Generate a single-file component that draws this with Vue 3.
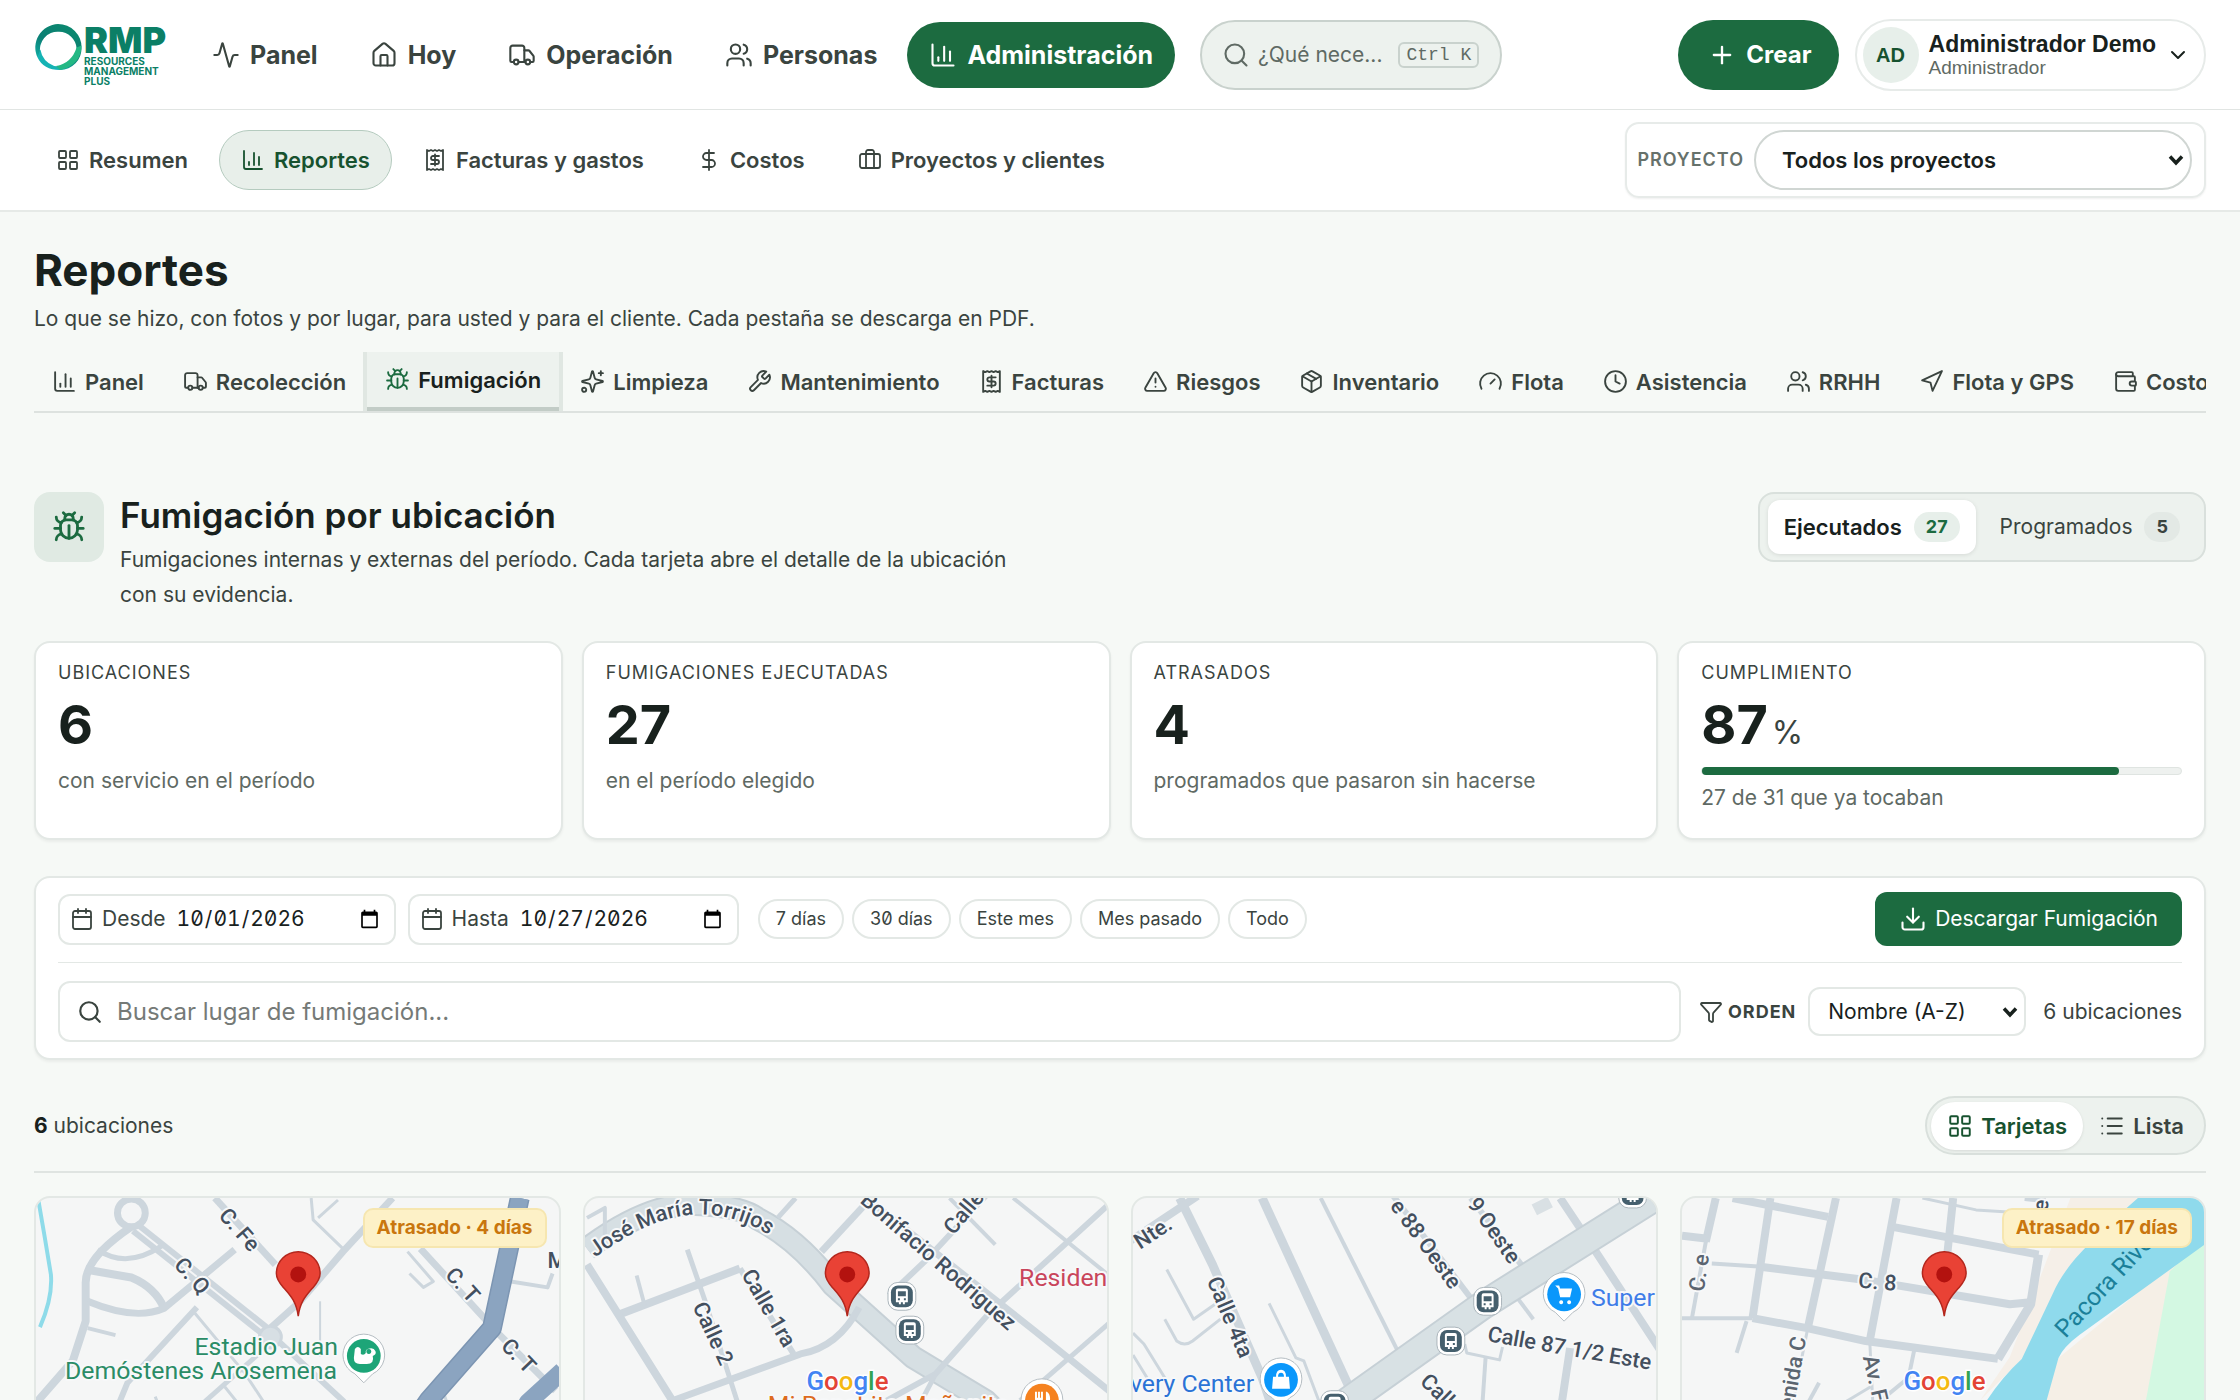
<script setup>
import { h, ref } from 'vue'

const icons = {
  activity: '<path d="M22 12h-2.48a2 2 0 0 0-1.93 1.46l-2.35 8.36a.25.25 0 0 1-.48 0L9.24 2.18a.25.25 0 0 0-.48 0l-2.35 8.36A2 2 0 0 1 4.49 12H2"/>',
  house: '<path d="M15 21v-8a1 1 0 0 0-1-1h-4a1 1 0 0 0-1 1v8"/><path d="M3 10a2 2 0 0 1 .709-1.528l7-5.999a2 2 0 0 1 2.582 0l7 5.999A2 2 0 0 1 21 10v9a2 2 0 0 1-2 2H5a2 2 0 0 1-2-2z"/>',
  truck: '<path d="M14 18V6a2 2 0 0 0-2-2H4a2 2 0 0 0-2 2v11a1 1 0 0 0 1 1h2"/><path d="M15 18H9"/><path d="M19 18h2a1 1 0 0 0 1-1v-3.65a1 1 0 0 0-.22-.624l-3.48-4.35A1 1 0 0 0 17.52 8H14"/><circle cx="17" cy="18" r="2"/><circle cx="7" cy="18" r="2"/>',
  users: '<path d="M16 21v-2a4 4 0 0 0-4-4H6a4 4 0 0 0-4 4v2"/><circle cx="9" cy="7" r="4"/><path d="M22 21v-2a4 4 0 0 0-3-3.87"/><path d="M16 3.13a4 4 0 0 1 0 7.75"/>',
  chart: '<path d="M3 3v16a2 2 0 0 0 2 2h16"/><path d="M18 17V9"/><path d="M13 17V5"/><path d="M8 17v-3"/>',
  search: '<circle cx="11" cy="11" r="8"/><path d="m21 21-4.3-4.3"/>',
  plus: '<path d="M5 12h14"/><path d="M12 5v14"/>',
  chevron: '<path d="m6 9 6 6 6-6"/>',
  grid: '<rect width="7" height="7" x="3" y="3" rx="1"/><rect width="7" height="7" x="14" y="3" rx="1"/><rect width="7" height="7" x="14" y="14" rx="1"/><rect width="7" height="7" x="3" y="14" rx="1"/>',
  receipt: '<path d="M4 2v20l2-1 2 1 2-1 2 1 2-1 2 1 2-1 2 1V2l-2 1-2-1-2 1-2-1-2 1-2-1-2 1Z"/><path d="M16 8h-6a2 2 0 1 0 0 4h4a2 2 0 1 1 0 4H8"/><path d="M12 17.5v-11"/>',
  dollar: '<path d="M12 2v20"/><path d="M17 5H9.5a3.5 3.5 0 0 0 0 7h5a3.5 3.5 0 0 1 0 7H6"/>',
  briefcase: '<path d="M16 20V4a2 2 0 0 0-2-2h-4a2 2 0 0 0-2 2v16"/><rect width="20" height="14" x="2" y="6" rx="2"/>',
  bug: '<path d="m8 2 1.88 1.88"/><path d="M14.12 3.88 16 2"/><path d="M9 7.13v-1a3.003 3.003 0 1 1 6 0v1"/><path d="M12 20c-3.3 0-6-2.7-6-6v-3a4 4 0 0 1 4-4h4a4 4 0 0 1 4 4v3c0 3.3-2.7 6-6 6"/><path d="M12 20v-9"/><path d="M6.53 9C4.6 8.8 3 7.1 3 5"/><path d="M6 13H2"/><path d="M3 21c0-2.1 1.7-3.9 3.8-4"/><path d="M20.97 5c0 2.1-1.6 3.8-3.5 4"/><path d="M22 13h-4"/><path d="M17.2 17c2.1.1 3.8 1.9 3.8 4"/>',
  sparkles: '<path d="M9.937 15.5A2 2 0 0 0 8.5 14.063l-6.135-1.582a.5.5 0 0 1 0-.962L8.5 9.936A2 2 0 0 0 9.937 8.5l1.582-6.135a.5.5 0 0 1 .963 0L14.063 8.5A2 2 0 0 0 15.5 9.937l6.135 1.581a.5.5 0 0 1 0 .964L15.5 14.063a2 2 0 0 0-1.437 1.437l-1.582 6.135a.5.5 0 0 1-.963 0z"/><path d="M20 2v4"/><path d="M22 4h-4"/><circle cx="4" cy="20" r="2"/>',
  wrench: '<path d="M14.7 6.3a1 1 0 0 0 0 1.4l1.6 1.6a1 1 0 0 0 1.4 0l3.77-3.77a6 6 0 0 1-7.94 7.94l-6.91 6.91a2.12 2.12 0 0 1-3-3l6.91-6.91a6 6 0 0 1 7.94-7.94l-3.76 3.76z"/>',
  alert: '<path d="m21.73 18-8-14a2 2 0 0 0-3.48 0l-8 14A2 2 0 0 0 4 21h16a2 2 0 0 0 1.73-3"/><path d="M12 9v4"/><path d="M12 17h.01"/>',
  box: '<path d="M11 21.73a2 2 0 0 0 2 0l7-4A2 2 0 0 0 21 16V8a2 2 0 0 0-1-1.73l-7-4a2 2 0 0 0-2 0l-7 4A2 2 0 0 0 3 8v8a2 2 0 0 0 1 1.73z"/><path d="M12 22V12"/><path d="m3.3 7 8.7 5 8.7-5"/><path d="m7.5 4.27 9 5.15"/>',
  gauge: '<path d="m12 14 4-4"/><path d="M3.34 19a10 10 0 1 1 17.32 0"/>',
  clock: '<circle cx="12" cy="12" r="10"/><path d="M12 6v6l4 2"/>',
  navigation: '<path d="m3 11 19-9-9 19-2-8z"/>',
  wallet: '<path d="M19 7V4a1 1 0 0 0-1-1H5a2 2 0 0 0 0 4h15a1 1 0 0 1 1 1v4h-3a2 2 0 0 0 0 4h3a1 1 0 0 0 1-1v-2a1 1 0 0 0-1-1"/><path d="M3 5v14a2 2 0 0 0 2 2h15a1 1 0 0 0 1-1v-4"/>',
  calendar: '<path d="M8 2v4"/><path d="M16 2v4"/><rect width="18" height="18" x="3" y="4" rx="2"/><path d="M3 10h18"/>',
  download: '<path d="M12 15V3"/><path d="M21 15v4a2 2 0 0 1-2 2H5a2 2 0 0 1-2-2v-4"/><path d="m7 10 5 5 5-5"/>',
  funnel: '<path d="M10 20a1 1 0 0 0 .553.895l2 1A1 1 0 0 0 14 21v-7a2 2 0 0 1 .517-1.341L21.74 4.67A1 1 0 0 0 21 3H3a1 1 0 0 0-.742 1.67l7.225 7.989A2 2 0 0 1 10 14z"/>',
  list: '<path d="M3 5h.01"/><path d="M3 12h.01"/><path d="M3 19h.01"/><path d="M8 5h13"/><path d="M8 12h13"/><path d="M8 19h13"/>',
}

const Icon = (props) =>
  h('svg', {
    viewBox: '0 0 24 24',
    width: props.size,
    height: props.size,
    fill: 'none',
    stroke: 'currentColor',
    'stroke-width': props.weight || 1.8,
    'stroke-linecap': 'round',
    'stroke-linejoin': 'round',
    'aria-hidden': 'true',
    class: 'icon',
    innerHTML: icons[props.name],
  })
Icon.props = ['name', 'size', 'weight']

const mainNav = [
  { label: 'Panel', icon: 'activity' },
  { label: 'Hoy', icon: 'house' },
  { label: 'Operación', icon: 'truck' },
  { label: 'Personas', icon: 'users' },
  { label: 'Administración', icon: 'chart', active: true },
]
const subNav = [
  { label: 'Resumen', icon: 'grid' },
  { label: 'Reportes', icon: 'chart', active: true },
  { label: 'Facturas y gastos', icon: 'receipt' },
  { label: 'Costos', icon: 'dollar' },
  { label: 'Proyectos y clientes', icon: 'briefcase' },
]
const tabs = [
  { label: 'Panel', icon: 'chart' },
  { label: 'Recolección', icon: 'truck' },
  { label: 'Fumigación', icon: 'bug', active: true },
  { label: 'Limpieza', icon: 'sparkles' },
  { label: 'Mantenimiento', icon: 'wrench' },
  { label: 'Facturas', icon: 'receipt' },
  { label: 'Riesgos', icon: 'alert' },
  { label: 'Inventario', icon: 'box' },
  { label: 'Flota', icon: 'gauge' },
  { label: 'Asistencia', icon: 'clock' },
  { label: 'RRHH', icon: 'users' },
  { label: 'Flota y GPS', icon: 'navigation' },
  { label: 'Costos', icon: 'wallet' },
]
const stats = [
  { label: 'Ubicaciones', value: '6', note: 'con servicio en el período' },
  { label: 'Fumigaciones ejecutadas', value: '27', note: 'en el período elegido' },
  { label: 'Atrasados', value: '4', note: 'programados que pasaron sin hacerse' },
  { label: 'Cumplimiento', value: '87', unit: '%', progress: 87, note: '27 de 31 que ya tocaban' },
]
const ranges = ['7 días', '30 días', 'Este mes', 'Mes pasado', 'Todo']

const desde = ref('2026-10-01')
const hasta = ref('2026-10-27')
const query = ref('')

// Roads: d = path, w = width, k = colour when it is not an ordinary street
const street = '#cdd6dd'
const maps = [
  {
    badge: 'Atrasado · 4 días',
    pin: true,
    roads: [
      { d: 'M96 29 Q50 60 50 85 V124 L37 164 L2 204 L-10 240', w: 8 },
      { d: 'M100 30 L232 135', w: 14 },
      { d: 'M100 30 L232 135', w: 2, k: '#f4f5f6' },
      { d: 'M246 146 L309 204 L340 240', w: 6 },
      { d: 'M62 52 Q91 72 127 48', w: 5 },
      { d: 'M50 72 L96 80 Q120 90 129 111', w: 8 },
      { d: 'M52 104 Q100 124 129 111 L200 52', w: 7 },
      { d: 'M52 131 L80 138', w: 4 },
      { d: 'M180 0 L241 67', w: 7 },
      { d: 'M359 0 L309 54 L266 104 L236 131', w: 7 },
      { d: 'M162 110 L92 186 L70 240', w: 6 },
      { d: 'M232 150 L170 205', w: 5 },
      { d: 'M160 116 L210 176 L252 240', w: 3 },
      { d: 'M277 0 L279 22 L310 52', w: 3 },
      { d: 'M286 104 V160', w: 2 },
      { d: 'M304 2 L284 20', w: 3 },
      { d: 'M374 54 L400 84 L390 90 L376 76', w: 3 },
      { d: 'M387 51 L466 137 L523 194', w: 7 },
      { d: 'M478 84 L515 90 L520 76', w: 4 },
      { d: 'M120 200 L136 240 M190 190 L230 240', w: 3 },
      { d: 'M410 195 L425 240', w: 3 },
      { d: 'M2 0 Q9 40 15 77 Q17 100 4 130', w: 4, k: '#8edbe9' },
      { d: 'M487 0 L459 131 L395 204 L370 240', w: 20, k: '#7c95b2' },
      { d: 'M487 0 L459 131 L395 204 L370 240', w: 17, k: '#8ba4c0' },
      { d: 'M530 174 L495 206 L480 240', w: 18, k: '#8ba4c0' },
    ],
    labels: [
      { t: 'C. Fe', x: 183, y: 18, r: 49 },
      { t: 'C. Q', x: 138, y: 68, r: 48 },
      { t: 'C. T', x: 411, y: 78, r: 48 },
      { t: 'C. T', x: 467, y: 150, r: 46 },
      { t: 'M', x: 515, y: 70, r: 0 },
      { t: 'Estadio Juan', x: 304, y: 158, a: 'end', s: 1, k: '#2a8c66' },
      { t: 'Demóstenes Arosemena', x: 303, y: 182, a: 'end', s: 1, k: '#2a8c66' },
    ],
    pois: [{ x: 330, y: 159, k: '#1da578', g: 'M-9 -7 q3 -4 6 0 v5 q3 2 5 -1 a5 4 0 1 1 7 3 q2 8 -6 8 h-7 q-6 0 -6 -6 z M5 -7 a2.500 2.500 0 1 0 .1 0 z' }],
  },
  {
    google: true,
    pin: true,
    roads: [
      { d: 'M2 51 Q70 0 124 7 Q160 10 174 21 Q215 42 250 88 L330 160 L403 204 L440 240', w: 24, k: '#c6d0d6' },
      { d: 'M2 51 Q70 0 124 7 Q160 10 174 21 Q215 42 250 88 L330 160 L403 204 L440 240', w: 20, k: '#d6dfe3' },
      { d: 'M35 117 L156 71', w: 8 },
      { d: 'M2 67 L88 204 L100 240', w: 8 },
      { d: 'M52 78 L60 108', w: 4 },
      { d: 'M103 52 L121 104 L153 204 L160 240', w: 5 },
      { d: 'M156 71 L210 157', w: 6 },
      { d: 'M420 -20 L345 61 L306 98', w: 6 },
      { d: 'M276 110 Q255 150 217 157 L88 204', w: 7 },
      { d: 'M288 0 L238 54', w: 7 },
      { d: 'M283 0 L453 134 L530 196', w: 7 },
      { d: 'M367 0 L413 47', w: 4 },
      { d: 'M431 0 L530 80', w: 4 },
      { d: 'M530 4 L406 117 L353 177 L300 206', w: 6 },
      { d: 'M530 124 L438 204', w: 5 },
      { d: 'M212 0 L194 20', w: 5 },
      { d: 'M2 20 L20 10 L20 40', w: 4 },
      { d: 'M353 177 L320 240', w: 5 },
    ],
    curve: { t: 'José María Torrijos', d: 'M10 60 C58 26 96 10 140 19 C170 26 188 36 214 62' },
    labels: [
      { t: 'Bonifacio Rodriguez', x: 276, y: 4, r: 41 },
      { t: 'Calle', x: 371, y: 38, r: -50 },
      { t: 'Calle 1ra', x: 157, y: 77, r: 60 },
      { t: 'Calle 2', x: 108, y: 109, r: 65 },
      { t: 'Residen', x: 437, y: 89, s: 1, k: '#c9455b' },
      { t: 'Mi Ranchito Mañanita', x: 184, y: 216, s: 1, k: '#dd6b20' },
    ],
    buses: [[319, 99], [327, 133]],
    pois: [{ x: 460, y: 204, k: '#f58220', g: 'M-7 -9 v7 q0 3 3 3 v9 h2 v-9 q3 0 3 -3 v-7 h-2 v6 h-1 v-6 h-2 v6 h-1 v-6 z M5 -9 q4 3 3 9 h-2 v8 h-2 v-17 z' }],
  },
  {
    roads: [
      { d: 'M47 0 L80 67 L130 181 L150 240', w: 9 },
      { d: 'M-4 44 L65 -2', w: 8 },
      { d: 'M130 0 L222 200', w: 9 },
      { d: 'M189 0 L269 159', w: 4 },
      { d: 'M256 -10 L344 106', w: 6 },
      { d: 'M340 0 L396 74', w: 6 },
      { d: 'M430 0 L458 42 L530 152', w: 8 },
      { d: 'M388 102 L403 122', w: 4 },
      { d: 'M34 72 L61 122 L84 106', w: 3 },
      { d: 'M32 122 L44 144 Q52 150 60 144 L88 122', w: 3 },
      { d: 'M137 106 L164 161 L172 164 L187 204', w: 3 },
      { d: 'M0 136 L11 147 L32 181 M0 158 L16 184', w: 3 },
      { d: 'M334 147 L336 156 L369 163 L372 150', w: 3 },
      { d: 'M355 160 L352 204', w: 4 },
      { d: 'M440 151 L432 204 L428 240', w: 8 },
      { d: 'M404 12 L420 4', w: 12, k: '#d9e0e4' },
      { d: 'M540 -10 L352 108 L206 212', w: 30, k: '#c6d0d6' },
      { d: 'M540 -10 L352 108 L206 212', w: 26, k: '#d8e1e4' },
    ],
    labels: [
      { t: 'Nte.', x: 7, y: 52, r: -33 },
      { t: 'Calle 4ta', x: 74, y: 83, r: 67 },
      { t: 'e 88 Oeste', x: 258, y: 8, r: 54 },
      { t: '9 Oeste', x: 336, y: 6, r: 55 },
      { t: 'Calle 87 1/2 Este', x: 356, y: 144, r: 10 },
      { t: 'Calle 87', x: 288, y: 186, r: 44 },
      { t: 'Super', x: 461, y: 109, s: 1, k: '#3f7de8' },
      { t: 'very Center', x: 122, y: 195, a: 'end', s: 1, k: '#2a73d6' },
    ],
    buses: [[357, 104], [320, 144], [203, 208], [503, -4]],
    pois: [
      { x: 434, y: 97, k: '#0a97fb', g: 'M-9 -9 h4 l1 3 h12 l-2 9 h-10 l-2 -9 z M-3 6 a2 2 0 1 0 .1 0 z M5 6 a2 2 0 1 0 .1 0 z' },
      { x: 149, y: 183, k: '#0a97fb', g: 'M-8 -3 h3 q0 -7 5 -7 q5 0 5 7 h3 l1 12 h-18 z M-3 -3 h6 q0 -4 -3 -4 q-3 0 -3 4 z' },
    ],
  },
  {
    badge: 'Atrasado · 17 días',
    google: true,
    pin: true,
    areas: [
      { d: 'M391 0 H462 L396 70 L342 162 L300 204 L330 160 Z', k: '#f5efe8' },
      { d: 'M526 40 L379 161 L350 240 H526 Z', k: '#f5efe6' },
      { d: 'M491 74 L526 40 V240 H462 L467 204 Z', k: '#d3f8e2' },
      { d: 'M459 0 Q420 34 396 61 Q380 80 373 97 L342 162 Q318 184 300 215 L290 240 H355 L367 204 L379 161 Q384 150 400 138 L526 47 V0 Z', k: '#8fdaec' },
    ],
    roads: [
      { d: 'M34 0 L24 44', w: 8 },
      { d: 'M24 44 L10 121', w: 4 },
      { d: 'M0 38 L26 41', w: 8 },
      { d: 'M89 0 L71 121', w: 8 },
      { d: 'M155 0 L126 134', w: 8 },
      { d: 'M126 134 L112 204', w: 3 },
      { d: 'M51 0 L147 19', w: 8 },
      { d: 'M216 0 L189 144', w: 8 },
      { d: 'M189 144 L192 204', w: 3 },
      { d: 'M212 29 L359 57', w: 8 },
      { d: 'M273 0 L267 57', w: 8 },
      { d: 'M359 57 L351 107 L318 162', w: 9 },
      { d: 'M77 69 L181 82 L330 107 L351 105', w: 8 },
      { d: 'M30 66 L77 69', w: 4 },
      { d: 'M71 121 L126 131 L185 144 L318 162', w: 8 },
      { d: 'M0 121 H71', w: 4 },
      { d: 'M65 124 L55 156', w: 4 },
      { d: 'M242 0 L296 12 L328 14', w: 3 },
      { d: 'M234 152 L228 181 L200 204', w: 4 },
      { d: 'M138 186 L126 208', w: 4 },
      { d: 'M190 190 L160 208', w: 3 },
      { d: 'M345 0 L366 2', w: 6 },
    ],
    labels: [
      { t: 'C. e', x: 22, y: 95, r: -82, k: '#5b6570' },
      { t: 'e', x: 368, y: 14, r: -84 },
      { t: 'C. 8', x: 177, y: 90, r: 5 },
      { t: 'Avenida C', x: 108, y: 238, r: -80, k: '#5b6570' },
      { t: 'Av. F', x: 182, y: 160, r: 77, k: '#5b6570' },
      { t: 'Pacora River', x: 386, y: 142, r: -47, s: 1, k: '#1b8099', bare: true },
    ],
  },
]
const google = [
  ['G', '#4384f3'], ['o', '#e34436'], ['o', '#f4b912'], ['g', '#4384f3'], ['l', '#34a353'], ['e', '#e34436'],
]
</script>

<template>
  <div class="app">
    <header class="topbar">
      <a class="brand" href="#" aria-label="RMP Resources Management Plus">
        <svg class="ring" viewBox="0 0 48 48" aria-hidden="true">
          <defs>
            <linearGradient id="ring-fill" x1="1" y1="0" x2="0.4" y2="1">
              <stop offset="0" stop-color="#0b8a6c" />
              <stop offset="0.6" stop-color="#0b7f74" />
              <stop offset="1" stop-color="#12b0a8" />
            </linearGradient>
          </defs>
          <path d="M24 0 A24 23.500 0 0 1 48 24 A22 22 0 0 1 26 47 L22 46 A19 20 0 0 0 43 25 A18 18 0 0 0 25 8 A18 18 0 0 0 6 30 L3 34 A24 24 0 0 1 24 0Z" fill="url(#ring-fill)" />
          <path d="M3 34 L6 26 Q8 38 20 43 Q34 44 42 34 Q40 44 26 47 Q9 47 3 34Z" fill="#15b3b4" />
          <path d="M48 22 Q48 42 26 47 L22 43 Q38 40 43 24 Z" fill="#23b884" />
        </svg>
        <span class="brand-text">
          <strong>RMP</strong>
          <small>RESOURCES</small>
          <small>MANAGEMENT</small>
          <small>PLUS</small>
        </span>
      </a>
      <nav class="main-nav" aria-label="Principal">
        <a v-for="n in mainNav" :key="n.label" href="#" :class="{ active: n.active }">
          <Icon :name="n.icon" size="28" />{{ n.label }}
        </a>
      </nav>
      <button class="quick" type="button">
        <Icon name="search" size="28" />
        <span>¿Qué nece...</span>
        <kbd>Ctrl K</kbd>
      </button>
      <div class="top-actions">
        <button class="create" type="button"><Icon name="plus" size="28" weight="2" />Crear</button>
        <button class="user" type="button">
          <span class="avatar">AD</span>
          <span class="who"><b>Administrador Demo</b><small>Administrador</small></span>
          <Icon name="chevron" size="24" weight="2" />
        </button>
      </div>
    </header>

    <div class="subbar">
      <nav class="sub-nav" aria-label="Administración">
        <a v-for="n in subNav" :key="n.label" href="#" :class="{ active: n.active }">
          <Icon :name="n.icon" size="24" />{{ n.label }}
        </a>
      </nav>
      <div class="project">
        <label for="project">Proyecto</label>
        <select id="project"><option>Todos los proyectos</option></select>
      </div>
    </div>

    <main>
      <h1>Reportes</h1>
      <p class="lead">Lo que se hizo, con fotos y por lugar, para usted y para el cliente. Cada pestaña se descarga en PDF.</p>

      <div class="tabs" role="tablist">
        <button v-for="t in tabs" :key="t.icon + t.label" type="button" role="tab" :aria-selected="!!t.active" :class="{ active: t.active }">
          <Icon :name="t.icon" size="25" />{{ t.label }}
        </button>
      </div>

      <section class="section-head">
        <span class="tile"><Icon name="bug" size="34" weight="2" /></span>
        <div class="section-text">
          <h2>Fumigación por ubicación</h2>
          <p>Fumigaciones internas y externas del período. Cada tarjeta abre el detalle de la ubicación con su evidencia.</p>
        </div>
        <div class="mode">
          <button type="button" class="active">Ejecutados <span>27</span></button>
          <button type="button">Programados <span>5</span></button>
        </div>
      </section>

      <section class="stats">
        <article v-for="s in stats" :key="s.label" class="stat">
          <h3>{{ s.label }}</h3>
          <p class="value">{{ s.value }}<small v-if="s.unit">{{ s.unit }}</small></p>
          <div v-if="s.progress" class="bar"><i :style="{ width: s.progress + '%' }"></i></div>
          <p class="note">{{ s.note }}</p>
        </article>
      </section>

      <section class="filters">
        <div class="filter-row">
          <label class="date"><Icon name="calendar" size="24" />Desde <input v-model="desde" type="date" /></label>
          <label class="date"><Icon name="calendar" size="24" />Hasta <input v-model="hasta" type="date" /></label>
          <div class="chips">
            <button v-for="r in ranges" :key="r" type="button">{{ r }}</button>
          </div>
          <button class="download" type="button"><Icon name="download" size="28" />Descargar Fumigación</button>
        </div>
        <div class="filter-row second">
          <label class="search">
            <Icon name="search" size="26" weight="2" />
            <input v-model="query" type="text" aria-label="Buscar lugar" placeholder="Buscar lugar de fumigación..." />
          </label>
          <label class="order" for="order"><Icon name="funnel" size="24" />Orden</label>
          <select id="order" class="order-select"><option>Nombre (A-Z)</option></select>
          <span class="total">6 ubicaciones</span>
        </div>
      </section>

      <div class="results-head">
        <p><b>6</b> ubicaciones</p>
        <div class="view">
          <button type="button" class="active"><Icon name="grid" size="26" />Tarjetas</button>
          <button type="button"><Icon name="list" size="26" />Lista</button>
        </div>
      </div>

      <section class="places">
        <article v-for="(m, i) in maps" :key="i" class="place">
          <svg class="map" viewBox="0 0 526 240" preserveAspectRatio="xMidYMin slice">
            <path v-for="(a, j) in m.areas" :key="'a' + j" :d="a.d" :fill="a.k" />
            <path v-for="(r, j) in m.roads" :key="'r' + j" class="road" :d="r.d" :stroke="r.k || street" :stroke-width="r.w" />
            <g v-if="i === 0">
              <circle cx="96" cy="15" r="14" fill="#f4f5f6" :stroke="street" stroke-width="7" />
              <circle cx="236" cy="140" r="11" fill="#d7dfe4" :stroke="street" stroke-width="3" />
            </g>
            <template v-if="m.curve">
              <path id="torrijos" :d="m.curve.d" fill="none" />
              <text class="label"><textPath href="#torrijos">{{ m.curve.t }}</textPath></text>
            </template>
            <text
              v-for="(l, j) in m.labels"
              :key="'l' + j"
              :class="['label', { poi: l.s, bare: l.bare }]"
              :transform="`translate(${l.x} ${l.y}) rotate(${l.r || 0})`"
              :text-anchor="l.a || 'start'"
              :fill="l.k || '#434f5e'"
            >{{ l.t }}</text>
            <g v-for="(b, j) in m.buses" :key="'b' + j" :transform="`translate(${b[0]} ${b[1]})`">
              <rect x="-14" y="-14" width="28" height="28" rx="10" fill="#fff" stroke="#aab4ba" />
              <rect x="-11" y="-11" width="22" height="22" rx="7" fill="#455f6d" />
              <path d="M-6 -6 q0 -2 2 -2 h8 q2 0 2 2 v12 h-3 v2 h-2 v-2 h-2 v2 h-2 v-2 h-3 z" fill="#fff" />
              <path d="M-4 -5 h8 v5 h-8 z M-4 2 h2 v2 h-2 z M2 2 h2 v2 h-2 z" fill="#455f6d" />
            </g>
            <g v-for="(p, j) in m.pois" :key="'p' + j" :transform="`translate(${p.x} ${p.y})`">
              <path d="M0 27 L-9 18 A21 21 0 1 1 9 18 Z" fill="#fff" stroke="#b4bcc2" />
              <circle r="17" :fill="p.k" />
              <path :d="p.g" fill="#fff" fill-rule="evenodd" />
            </g>
            <text v-if="m.google" class="google" x="223" y="193">
              <tspan v-for="(g, j) in google" :key="j" :fill="g[1]">{{ g[0] }}</tspan>
            </text>
            <g v-if="m.pin">
              <path d="M264 119 C262 104 256 98 249 90 Q242 82 242 76 A22 22 0 0 1 286 76 Q286 82 279 90 C272 98 266 104 264 119Z" fill="#e94235" stroke="#b3271d" stroke-width="1.500" />
              <circle cx="264" cy="77" r="8" fill="#b3120f" />
            </g>
          </svg>
          <span v-if="m.badge" class="badge">{{ m.badge }}</span>
        </article>
      </section>
    </main>
  </div>
</template>

<style>
body {
  background: #f6f9f6;
}
</style>

<style scoped>
.app {
  --green: #1c6b40;
  --deep: #17522f;
  --ink: #18211d;
  --text: #3a443f;
  --muted: #5f6a64;
  --line: #e3e8e5;
  --soft: #edf2ee;
  display: flex;
  flex-direction: column;
  height: 100vh;
  color: var(--text);
  background: #f6f9f6;
  font: 400 21px/30px Inter, "Liberation Sans", sans-serif;
  font-variant-numeric: slashed-zero;
}
*, *::before, *::after { box-sizing: border-box; }
h1, h2, h3, p { margin: 0; }
a { color: inherit; text-decoration: none; }
button, input, select { font: inherit; font-variant-numeric: inherit; color: inherit; }
button { display: inline-flex; align-items: center; border: 0; background: none; padding: 0; white-space: nowrap; }
select {
  appearance: none;
  background: #fff url("data:image/svg+xml,%3Csvg xmlns='http://www.w3.org/2000/svg' width='16' height='12' viewBox='0 0 16 12'%3E%3Cpath d='M2 2.500 8 9l6-6.500' fill='none' stroke='%2318211d' stroke-width='3.500'/%3E%3C/svg%3E") no-repeat right 6px center;
}
.icon { flex: none; }

.topbar {
  display: flex;
  align-items: center;
  height: 110px;
  padding: 0 34px;
  background: #fff;
  border-bottom: 1px solid #e1e5e3;
}
.brand { display: flex; align-items: flex-start; gap: 2px; width: 134px; margin-right: 22px; }
.ring { width: 48px; height: 47px; }
.brand-text { display: flex; flex-direction: column; color: #0b7f66; }
.brand-text strong { font-size: 36px; line-height: 32px; font-weight: 900; }
.brand-text small { font-size: 10px; line-height: 10px; font-weight: 700; }
.main-nav { display: flex; gap: 8px; }
.main-nav a {
  display: flex;
  align-items: center;
  gap: 10px;
  height: 66px;
  padding: 0 22px;
  border-radius: 33px;
  font-size: 25px;
  font-weight: 700;
}
.main-nav a.active { background: var(--green); color: #fff; }
.quick {
  gap: 8px;
  height: 70px;
  margin-left: 25px;
  padding: 0 21px 0 20px;
  border: 2px solid #c9d2cd;
  border-radius: 35px;
  background: var(--soft);
  color: var(--muted);
}
.quick kbd {
  margin-left: 8px;
  padding: 0 6px;
  border: 2px solid #c9d2cd;
  border-radius: 6px;
  font: 18px/22px "Liberation Mono", monospace;
}
.top-actions { display: flex; align-items: center; gap: 16px; margin-left: auto; }
.create {
  gap: 10px;
  height: 70px;
  padding: 0 27px 0 30px;
  border-radius: 35px;
  background: var(--green);
  color: #fff;
  font-size: 24px;
  font-weight: 700;
}
.user {
  gap: 10px;
  height: 72px;
  padding: 0 14px 0 6px;
  border: 2px solid #e7ebe9;
  border-radius: 36px;
  background: #fff;
  color: var(--ink);
  text-align: left;
}
.avatar {
  width: 56px;
  height: 56px;
  border-radius: 50%;
  background: #e7efea;
  color: var(--deep);
  font: 700 20px/56px "Liberation Sans", sans-serif;
  text-align: center;
}
.who { display: flex; flex-direction: column; font-family: "Liberation Sans", sans-serif; }
.who b { font-size: 23px; line-height: 26px; }
.who small { font-size: 19px; line-height: 22px; color: var(--muted); }

.subbar {
  display: flex;
  align-items: center;
  justify-content: space-between;
  height: 102px;
  padding: 0 34px;
  background: #fff;
  border-bottom: 2px solid #e6eae7;
}
.sub-nav { display: flex; gap: 9px; }
.sub-nav a {
  display: flex;
  align-items: center;
  gap: 9px;
  height: 60px;
  padding: 0 21px;
  border: 1px solid transparent;
  border-radius: 30px;
  font-size: 22px;
  font-weight: 600;
}
.sub-nav a.active { background-color: #e8efea; border-color: #b5cbbf; color: var(--deep); }
.project {
  display: flex;
  align-items: center;
  gap: 10px;
  height: 76px;
  padding: 0 12px 0 10px;
  border: 2px solid #e7ebe9;
  border-radius: 14px;
  box-shadow: 0 1px 2px #00000010;
}
.project label { color: #66716b; font-size: 18px; font-weight: 600; letter-spacing: 1px; text-transform: uppercase; }
.project select {
  width: 438px;
  height: 60px;
  padding: 0 0 0 26px;
  border: 2px solid #d0d6d3;
  border-radius: 30px;
  color: var(--ink);
  font-size: 22px;
  font-weight: 600;
}

main { flex: 1; min-height: 0; overflow-y: auto; scrollbar-width: none; padding: 33px 34px 0; }
h1 { font-size: 44px; line-height: 50px; font-weight: 700; color: var(--ink); }
.lead { margin-top: 9px; line-height: 30px; }

.tabs {
  display: flex;
  gap: 3px;
  height: 61px;
  margin-top: 18px;
  overflow: hidden;
  border-bottom: 2px solid #dde2df;
}
.tabs button { flex: none; gap: 8px; height: 59px; padding: 0 18px; font-size: 22px; font-weight: 600; }
.tabs button.active {
  background: var(--soft);
  border-bottom: 4px solid #c2ccc6;
  box-shadow: -4px 0 #e0e7e2, 4px 0 #e0e7e2;
  color: var(--ink);
}
.tabs button.active .icon { color: var(--green); }

.section-head { display: flex; align-items: flex-start; margin-top: 79px; }
.tile {
  display: grid;
  place-items: center;
  width: 70px;
  height: 70px;
  margin-right: 16px;
  border-radius: 16px;
  background: #e0eae3;
  color: var(--green);
}
.section-text { flex: 0 1 920px; }
h2 { font-size: 35px; line-height: 46px; font-weight: 600; color: var(--ink); }
.section-text p { line-height: 35px; margin-top: 4px; }
.mode {
  display: flex;
  gap: 8px;
  height: 70px;
  margin-left: auto;
  padding: 6px 8px;
  border: 2px solid #d9e0dc;
  border-radius: 16px;
  background: var(--soft);
}
.mode button { gap: 12px; height: 54px; padding: 0 16px; border-radius: 12px; }
.mode button.active { background: #fff; color: var(--ink); font-size: 22px; font-weight: 600; box-shadow: 0 1px 4px #0000001a; }
.mode span { padding: 0 12px; border-radius: 15px; background: #e3e9e5; font-size: 18px; line-height: 30px; font-weight: 700; }
.mode .active span { background: #e7efea; color: var(--green); }

.stats { display: grid; grid-template-columns: repeat(4, 1fr); gap: 19px; margin-top: 29px; }
.stat {
  height: 199px;
  padding: 17px 22px;
  border: 2px solid var(--line);
  border-radius: 16px;
  background: #fff;
  box-shadow: 0 2px 3px #0000000d;
}
.stat h3 { font-size: 18px; line-height: 26px; font-weight: 400; letter-spacing: 1px; text-transform: uppercase; }
.value { margin-top: 8px; font-size: 54px; line-height: 62px; font-weight: 700; color: var(--ink); }
.value small { margin-left: 4px; font-size: 32px; font-weight: 400; color: var(--text); }
.note { margin-top: 10px; color: var(--muted); }
.bar { height: 8px; margin-top: 3px; border: 1px solid #dfe4e1; border-radius: 4px; background: #eef1ef; }
.bar i { display: block; height: 8px; margin-top: -1px; border-radius: 4px; background: var(--green); }
.bar + .note { margin-top: 8px; }

.filters {
  margin-top: 36px;
  padding: 14px 22px 16px;
  border: 2px solid var(--line);
  border-radius: 16px;
  background: #fff;
  box-shadow: 0 2px 3px #0000000d;
}
.filter-row { display: flex; align-items: center; gap: 12px; }
.date {
  display: flex;
  align-items: center;
  gap: 8px;
  height: 51px;
  padding: 0 12px 0 10px;
  border: 2px solid var(--line);
  border-radius: 12px;
}
.date input { width: 208px; padding: 0 0 0 2px; border: 0; background: none; color: var(--ink); font-variant-numeric: tabular-nums slashed-zero; }
.chips { display: flex; gap: 8px; margin-left: 7px; }
.chips button { height: 40px; padding: 0 16px; border: 2px solid var(--line); border-radius: 20px; font-size: 18px; }
.download { gap: 8px; height: 54px; margin-left: auto; padding: 0 24px; border-radius: 12px; background: var(--green); color: #fff; }
.second { margin-top: 16px; padding-top: 18px; border-top: 1px solid var(--line); }
.search {
  flex: 1;
  display: flex;
  align-items: center;
  gap: 14px;
  height: 61px;
  padding: 0 17px;
  border: 2px solid var(--line);
  border-radius: 12px;
}
.search input { flex: 1; border: 0; padding: 0; outline: 0; background: none; font-size: 24px; }
.search input::placeholder { color: #757a77; }
.order { display: flex; align-items: center; gap: 5px; margin-left: 6px; font-size: 18px; font-weight: 700; letter-spacing: 1px; text-transform: uppercase; }
.order-select { width: 218px; height: 49px; padding: 0 0 0 18px; border: 2px solid var(--line); border-radius: 12px; color: var(--ink); }
.total { margin-left: 5px; }

.results-head {
  display: flex;
  align-items: center;
  justify-content: space-between;
  margin-top: 36px;
  padding-bottom: 16px;
  border-bottom: 2px solid #dfe4e1;
}
.results-head b { color: var(--ink); }
.view { display: flex; height: 59px; padding: 4px; border: 2px solid #d9e0dc; border-radius: 30px; background: var(--soft); }
.view button { gap: 8px; height: 48px; padding: 0 16px; border-radius: 24px; font-size: 22px; font-weight: 600; }
.view button.active { background: #fff; color: var(--deep); box-shadow: 0 1px 3px #0000001a; }

.places { display: grid; grid-template-columns: repeat(4, 1fr); gap: 22px; margin-top: 23px; }
.place { position: relative; overflow: hidden; border: 2px solid var(--line); border-radius: 16px; background: #f5f6f6; }
.map { display: block; width: 100%; height: auto; font-family: Roboto, sans-serif; font-variant-numeric: normal; }
.road { fill: none; stroke-linejoin: round; }
.label { font-size: 22px; font-weight: 500; paint-order: stroke; stroke: #f7f8f9; stroke-width: 4px; stroke-linejoin: round; }
.label:not([fill]) { fill: #434f5e; }
.label.poi { font-size: 25px; font-weight: 400; }
.label.bare { stroke: none; }
.google { font-size: 26px; font-weight: 500; paint-order: stroke; stroke: #fff; stroke-width: 3px; }
.badge {
  position: absolute;
  top: 10px;
  right: 12px;
  padding: 0 12px;
  border: 2px solid #f6e6b0;
  border-radius: 10px;
  background: #fdf1c7;
  color: #c9760e;
  font-size: 19px;
  line-height: 36px;
  font-weight: 700;
}
</style>
